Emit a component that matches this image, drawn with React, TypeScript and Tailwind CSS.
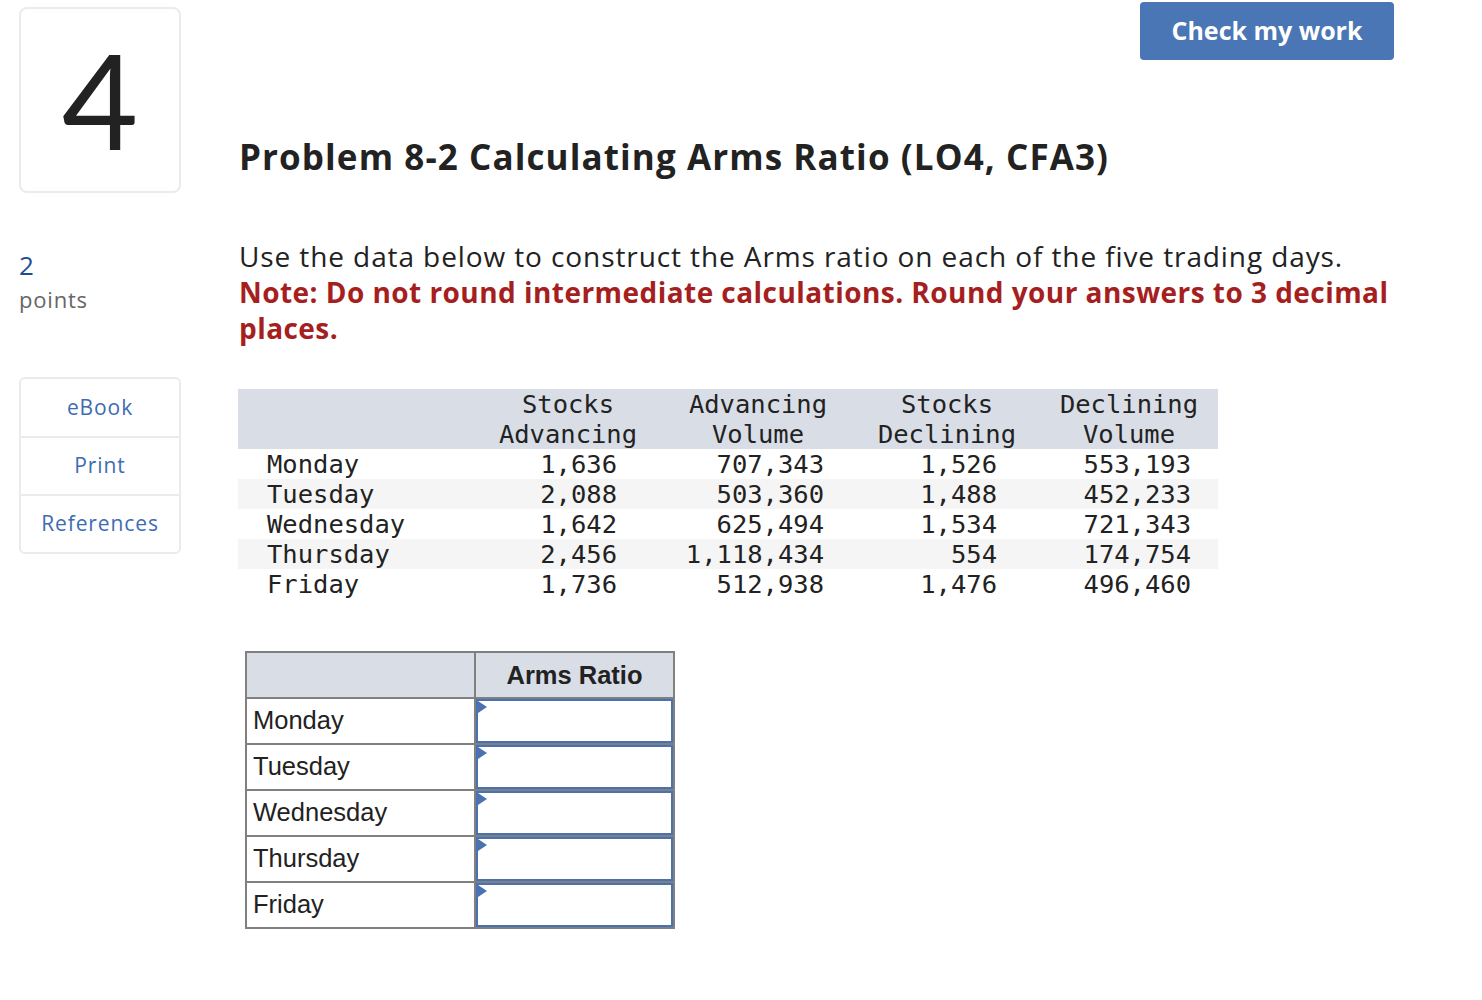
const rows = [
  { day: "Monday", sa: "1,636", av: "707,343", sd: "1,526", dv: "553,193" },
  { day: "Tuesday", sa: "2,088", av: "503,360", sd: "1,488", dv: "452,233" },
  { day: "Wednesday", sa: "1,642", av: "625,494", sd: "1,534", dv: "721,343" },
  { day: "Thursday", sa: "2,456", av: "1,118,434", sd: "554", dv: "174,754" },
  { day: "Friday", sa: "1,736", av: "512,938", sd: "1,476", dv: "496,460" },
];

const sans = "font-['Open_Sans',sans-serif]";

const SideLinks = () => (
  <div className="mt-[63px] w-[162px] rounded-md border-2 border-[#ebebeb] text-[21px] tracking-[0.9px] text-[#3d6cb3]">
    <div className="flex h-[59px] items-center justify-center border-b-2 border-[#ebebeb]">eBook</div>
    <div className="flex h-[58px] items-center justify-center border-b-2 border-[#ebebeb]">Print</div>
    <div className="flex h-[56px] items-center justify-center">References</div>
  </div>
);

const AnswerInput = () => (
  <div className="relative h-full w-full border-2 border-[#4a72b2] bg-white">
    <div className="absolute left-0 top-0 h-0 w-0 border-y-[6px] border-l-[9px] border-y-transparent border-l-[#4a72b2]" />
  </div>
);

export default function App() {
  return (
    <div className={`min-h-screen bg-white ${sans} text-[#222]`}>
      <div className="flex pl-[19px]">
        {/* left column */}
        <div className="flex w-[162px] flex-col pt-[7px]">
          <div className="flex h-[186px] items-center justify-center rounded-lg border-2 border-[#ebebeb] font-['Lato',sans-serif] text-[132px] font-normal leading-none text-[#222]">
            <span className="-mt-[2px]">4</span>
          </div>
          <div className="mt-[57px] text-[26px] leading-[30px] text-[#1f4e8f]">2</div>
          <div className="mt-[4px] text-[22px] leading-[30px] tracking-[0.8px] text-[#666]">points</div>
          <SideLinks />
        </div>

        {/* main */}
        <div className="ml-[58px] flex w-[1155px] flex-col">
          <div className="flex justify-end pt-[2px]">
            <button className="h-[58px] w-[254px] rounded-[4px] bg-[#4a76b6] text-[25px] font-bold text-white">
              Check my work
            </button>
          </div>
          <h1 className="mt-[75px] text-[35px] font-bold leading-[44px] tracking-[1.1px] text-[#222]">
            Problem 8-2 Calculating Arms Ratio (LO4, CFA3)
          </h1>
          <div className="mt-[59px] text-[28px] leading-[36px]">
            <p className="tracking-[0.9px]">Use the data below to construct the Arms ratio on each of the five trading days.</p>
            <p className="font-bold tracking-[0.45px] text-[#a61f1f]">
              Note: Do not round intermediate calculations. Round your answers to 3 decimal places.
            </p>
          </div>

          {/* data table */}
          <div className="-ml-px mt-[43px] w-[980px] font-['DejaVu_Sans_Mono',monospace] text-[25.5px] leading-[30px] text-[#222]">
            <div className="flex bg-[#d9dde6]">
              <div className="w-[252px]" />
              <div className="w-[156px] text-center">Stocks<br />Advancing</div>
              <div className="w-[224px] text-center">Advancing<br />Volume</div>
              <div className="w-[154px] text-center">Stocks<br />Declining</div>
              <div className="w-[194px] pl-[16px] text-center">Declining<br />Volume</div>
            </div>
            {rows.map((r, i) => (
              <div key={r.day} className={`flex ${i % 2 === 1 ? "bg-[#f5f5f5]" : "bg-white"}`}>
                <div className="w-[252px] pl-[29px]">{r.day}</div>
                <div className="w-[156px] pr-[29px] text-right">{r.sa}</div>
                <div className="w-[224px] pr-[46px] text-right">{r.av}</div>
                <div className="w-[154px] pr-[27px] text-right">{r.sd}</div>
                <div className="w-[194px] pr-[27px] text-right">{r.dv}</div>
              </div>
            ))}
          </div>

          {/* answer table */}
          <table className="ml-[6px] mt-[52px] w-[430px] border-collapse font-['Liberation_Sans',Arial,sans-serif] text-[25.5px] text-[#222]">
            <thead>
              <tr className="h-[46px] bg-[#d9dde6]">
                <th className="w-[229px] border-2 border-[#808080]" />
                <th className="border-2 border-[#808080] text-center font-bold">Arms Ratio</th>
              </tr>
            </thead>
            <tbody>
              {rows.map((r) => (
                <tr key={r.day} className="h-[46px]">
                  <td className="border-2 border-[#808080] pl-[6px] leading-none">{r.day}</td>
                  <td className="h-[46px] border-2 border-[#808080] p-0">
                    <AnswerInput />
                  </td>
                </tr>
              ))}
            </tbody>
          </table>
        </div>
      </div>
    </div>
  );
}
